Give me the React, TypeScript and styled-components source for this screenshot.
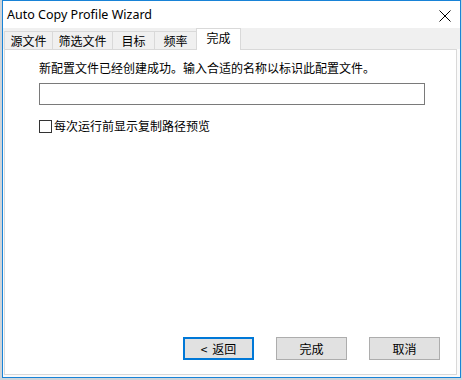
import React from "react";
import styled, { createGlobalStyle } from "styled-components";

const Global = createGlobalStyle`
  html, body { margin: 0; padding: 0; }
  body {
    background: #cfd4d9;
    font-family: "Noto Sans CJK SC", "Noto Sans", sans-serif;
    font-size: 12px;
    color: #000;
  }
  * { box-sizing: border-box; }
`;

const Window = styled.div`
  margin-left: 2px;
  width: 459px;
  height: 378px;
  border: 1px solid #1883d7;
  background: #fafafa;
  display: flex;
  flex-direction: column;
`;

const TitleBar = styled.div`
  height: 27px;
  background: #fff;
  display: flex;
  align-items: center;
  justify-content: space-between;
  padding: 0 8px 0 4px;
`;

const Title = styled.span`
  font-family: "Noto Sans", "Liberation Sans", sans-serif;
  font-size: 12.5px;
  line-height: 16px;
  margin-top: 1px;
`;

const CloseIcon = styled.svg`
  width: 12px;
  height: 12px;
  margin-right: 1px;
  margin-top: 2px;
`;

const TabStrip = styled.div`
  height: 21px;
  background: #f0f0f0;
  display: flex;
  align-items: flex-end;
  padding-left: 1px;
  position: relative;
  z-index: 1;
`;

const Tab = styled.div<{ $active?: boolean }>`
  height: ${(p) => (p.$active ? "22px" : "18px")};
  min-width: ${(p) => (p.$active ? "45px" : "43px")};
  margin-left: -1px;
  margin-bottom: ${(p) => (p.$active ? "-1px" : "0")};
  padding: ${(p) => (p.$active ? "1px 8px 0" : "1px 5.5px 0")};
  border: 1px solid #d9d9d9;
  border-bottom: none;
  background: ${(p) => (p.$active ? "#fff" : "#f0f0f0")};
  display: flex;
  align-items: ${(p) => (p.$active ? "flex-start" : "center")};
  justify-content: center;
  font-size: 12px;
  line-height: 16px;
  white-space: nowrap;
  &:first-child { margin-left: 0; }
`;

const Panel = styled.div`
  flex: 1;
  margin: 0 3px 2px 1px;
  background: #fff;
  border: 1px solid #d9d9d9;
  display: flex;
  flex-direction: column;
  padding: 10px 16px 14px 34px;
`;

const Message = styled.div`
  line-height: 16px;
  white-space: nowrap;
`;

const NameInput = styled.input`
  margin-top: 7px;
  width: 386px;
  height: 22px;
  border: 1px solid #7a7a7a;
  background: #fff;
  outline: none;
  padding: 0 3px;
  font: inherit;
`;

const CheckRow = styled.label`
  margin-top: 13px;
  display: flex;
  align-items: center;
  gap: 2px;
  line-height: 16px;
`;

const Box = styled.span`
  width: 13px;
  height: 13px;
  border: 1px solid #333;
  background: #fff;
  display: inline-block;
`;

const Spacer = styled.div`
  flex: 1;
`;

const ButtonRow = styled.div`
  display: flex;
  justify-content: flex-end;
  gap: 22px;
`;

const Button = styled.button<{ $default?: boolean }>`
  width: 71px;
  height: 23px;
  padding: 0;
  background: #e1e1e1;
  border: ${(p) => (p.$default ? "2px solid #0078d7" : "1px solid #adadad")};
  font-family: "Noto Sans CJK SC", "Noto Sans", sans-serif;
  font-size: 12px;
  line-height: 16px;
  color: #000;
  display: flex;
  align-items: center;
  justify-content: center;
  gap: 5px;
`;

export default function App() {
  const tabs = ["源文件", "筛选文件", "目标", "频率", "完成"];
  return (
    <>
      <Global />
      <Window>
        <TitleBar>
          <Title>Auto Copy Profile Wizard</Title>
          <CloseIcon viewBox="0 0 12 12">
            <path d="M0.5 0.5 L11.5 11.5 M11.5 0.5 L0.5 11.5" stroke="#000" strokeWidth="1" fill="none" />
          </CloseIcon>
        </TitleBar>
        <TabStrip>
          {tabs.map((t, i) => (
            <Tab key={t} $active={i === tabs.length - 1}>
              {t}
            </Tab>
          ))}
        </TabStrip>
        <Panel>
          <Message>新配置文件已经创建成功。输入合适的名称以标识此配置文件。</Message>
          <NameInput />
          <CheckRow>
            <Box />
            每次运行前显示复制路径预览
          </CheckRow>
          <Spacer />
          <ButtonRow>
            <Button $default>
              <span>&lt;</span>
              <span>返回</span>
            </Button>
            <Button>完成</Button>
            <Button>取消</Button>
          </ButtonRow>
        </Panel>
      </Window>
    </>
  );
}
